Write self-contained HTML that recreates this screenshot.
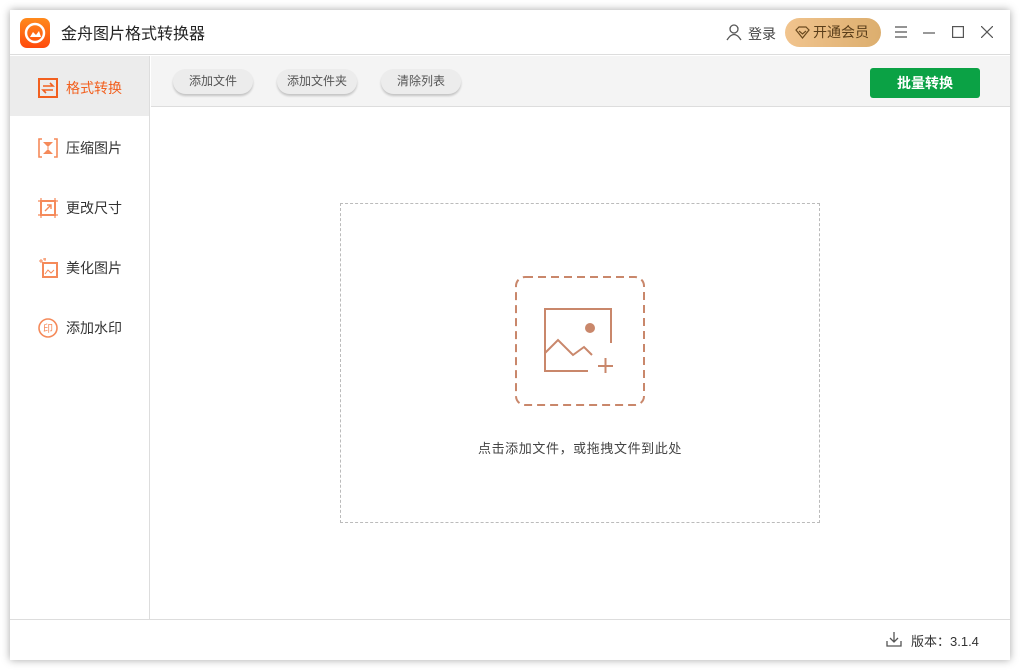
<!DOCTYPE html>
<html><head><meta charset="utf-8"><style>
*{margin:0;padding:0;box-sizing:border-box}
body{width:1020px;height:670px;background:#fff;font-family:"Liberation Sans","Noto Sans CJK SC",sans-serif;position:relative;overflow:hidden}
.win{position:absolute;left:10px;top:10px;width:1000px;height:650px;background:#fff;box-shadow:0 0 8px rgba(0,0,0,.35)}
.title{position:absolute;left:0;top:0;width:1000px;height:45px;border-bottom:1px solid #ddd}
.logo{position:absolute;left:10px;top:8px;width:30px;height:30px;border-radius:7px;background:linear-gradient(#ff8a1c,#ff4a0c)}
.tt{position:absolute;left:51px;top:10px;font-size:16px;color:#222}
.side{position:absolute;left:0;top:46px;width:140px;height:563px;border-right:1px solid #ddd}
.item{height:60px;display:flex;align-items:center;padding-left:28px;padding-top:3px;font-size:14px;color:#333}
.item svg{margin-right:8px}
.item.act{background:#ececec;color:#f2601f}
.tool{position:absolute;left:141px;top:46px;width:859px;height:51px;background:#f4f4f4;border-bottom:1px solid #ddd}
.btn{position:absolute;top:13px;height:25px;border-radius:13px;background:#ececec;box-shadow:0 2px 2px rgba(0,0,0,.2);font-size:12px;color:#555;text-align:center;line-height:25px}
.go{position:absolute;left:719px;top:12px;width:110px;height:30px;background:#0ba245;border-radius:3px;color:#fff;font-size:14px;font-weight:bold;text-align:center;line-height:30px}
.drop{position:absolute;left:330px;top:193px;width:480px;height:320px;border:1px dashed #bbb}
.foot{position:absolute;left:0;top:609px;width:1000px;height:41px;border-top:1px solid #ddd}
</style></head><body>
<div class="win">
<div class="title">
<div class="logo"><svg width="30" height="30"><circle cx="15" cy="15" r="9" fill="none" stroke="#fff" stroke-width="2.5"/><path d="M10 19 L13 14 L16 17 L19 13 L21 19Z" fill="#fff"/></svg></div>
<div class="tt">金舟图片格式转换器</div>
<svg style="position:absolute;left:716px;top:14px" width="16" height="17"><circle cx="8" cy="5" r="4" fill="none" stroke="#555" stroke-width="1.3"/><path d="M1 16 Q8 5 15 16" fill="none" stroke="#555" stroke-width="1.3"/></svg>
<div style="position:absolute;left:738px;top:14px;font-size:14px;color:#444">登录</div>
<div style="position:absolute;left:775px;top:8px;width:96px;height:29px;border-radius:15px;background:linear-gradient(90deg,#f1c48e,#dcae6e);font-size:14px;color:#5a3e1a;line-height:29px;padding-left:28px">开通会员<svg style="position:absolute;left:10px;top:8px" width="15" height="13"><path d="M1 4 L4 1 H11 L14 4 L7.5 12Z M4 5 L7.5 8 L11 5" fill="none" stroke="#6b4a1f" stroke-width="1.2"/></svg></div>
<svg style="position:absolute;left:884px;top:16px" width="14" height="12"><path d="M1 1H13M1 6H13M1 11H13" stroke="#555" stroke-width="1.2"/></svg>
<svg style="position:absolute;left:913px;top:22px" width="12" height="2"><path d="M0 1H12" stroke="#555" stroke-width="1.2"/></svg>
<svg style="position:absolute;left:942px;top:16px" width="12" height="12"><rect x=".6" y=".6" width="10.8" height="10.8" fill="none" stroke="#555" stroke-width="1.2"/></svg>
<svg style="position:absolute;left:971px;top:16px" width="12" height="12"><path d="M0 0L12 12M12 0L0 12" stroke="#555" stroke-width="1.2"/></svg>
</div>
<div class="side">
<div class="item act"><svg width="20" height="20"><rect x="1" y="1" width="18" height="18" fill="none" stroke="#f2601f" stroke-width="2"/><path d="M5 8H15L12 5M15 12H5L8 15" fill="none" stroke="#f2601f" stroke-width="1.6"/></svg>格式转换</div>
<div class="item"><svg width="20" height="20"><path d="M4 1H1V19H4M16 1H19V19H16" fill="none" stroke="#f58a5a" stroke-width="1.6"/><path d="M5 4H15L9 10L15 16H5L11 10Z" fill="#f58a5a"/></svg>压缩图片</div>
<div class="item"><svg width="20" height="20"><rect x="3" y="3" width="14" height="14" fill="none" stroke="#f58a5a" stroke-width="2"/><path d="M3 0V20M17 0V20M0 3H20M0 17H20" stroke="#f58a5a" stroke-width="1.2"/><path d="M7 13L13 7M9 7H13V11" fill="none" stroke="#f58a5a" stroke-width="1.4"/></svg>更改尺寸</div>
<div class="item"><svg width="20" height="20"><rect x="5" y="5" width="14" height="14" fill="none" stroke="#f58a5a" stroke-width="2"/><path d="M1 3H5M3 1V5M5 1H8M7 0V3" stroke="#f58a5a"/><path d="M7 16L10 12L13 15L16 12" fill="none" stroke="#f58a5a"/></svg>美化图片</div>
<div class="item"><svg width="20" height="20"><circle cx="10" cy="10" r="9" fill="none" stroke="#f58a5a" stroke-width="1.6"/><text x="10" y="14" font-size="10" text-anchor="middle" fill="#f58a5a" font-family="Noto Sans CJK SC">印</text></svg>添加水印</div>
</div>
<div class="tool">
<div class="btn" style="left:22px;width:80px">添加文件</div>
<div class="btn" style="left:126px;width:80px">添加文件夹</div>
<div class="btn" style="left:230px;width:80px">清除列表</div>
<div class="go">批量转换</div>
</div>
<div class="drop">
<svg style="position:absolute;left:174px;top:72px" width="132" height="132"><rect x="1" y="1" width="128" height="128" rx="9" fill="none" stroke="#c9876b" stroke-width="2" stroke-dasharray="8 5"/><path d="M73 95H30V33H96V67" fill="none" stroke="#c9876b" stroke-width="2"/><circle cx="75" cy="52" r="5" fill="#c9876b"/><path d="M30 77L43 64L58 79L69 71L77 79" fill="none" stroke="#c9876b" stroke-width="2"/><path d="M83 90H98M90.5 82V97" stroke="#c9876b" stroke-width="2"/></svg>
<div style="position:absolute;left:0;width:478px;top:234px;text-align:center;font-size:13px;letter-spacing:.6px;color:#444">点击添加文件，或拖拽文件到此处</div>
</div>
<div class="foot">
<svg style="position:absolute;left:876px;top:11px" width="16" height="16"><path d="M8 1V11M4 7L8 11L12 7M1 10V15H15V10" fill="none" stroke="#555" stroke-width="1.3"/></svg>
<div style="position:absolute;left:901px;top:11px;font-size:13px;color:#333">版本：3.1.4</div>
</div>
</div>
</body></html>
